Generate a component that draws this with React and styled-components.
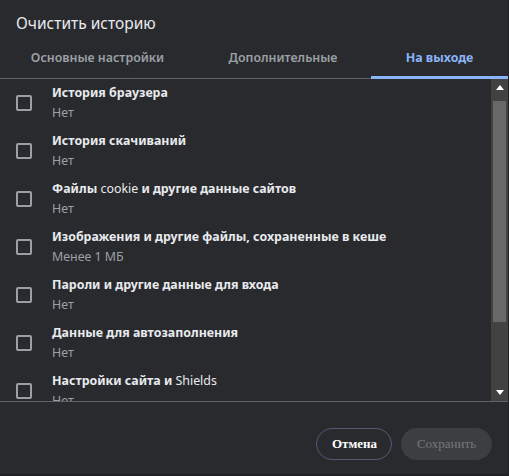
import React from "react";
import styled, { createGlobalStyle } from "styled-components";

const Global = createGlobalStyle`
  html, body { margin: 0; padding: 0; background: #202124; }
  body { font-family: "Noto Sans", "Open Sans", sans-serif; }
`;

const Dialog = styled.div`
  width: 508px;
  height: 474px;
  background: #292a2d;
  display: flex;
  flex-direction: column;
  color: #e8eaed;
`;

const Title = styled.div`
  padding: 13px 16px 0;
  height: 27px;
  font-size: 15.5px;
  line-height: 20px;
  color: #e8eaed;
`;

const TabBar = styled.div`
  display: flex;
  border-bottom: 1px solid #5f6368;
  box-sizing: border-box;
  height: 39px;
`;

const Tab = styled.div`
  width: ${(p) => p.$w}px;
  box-sizing: border-box;
  display: flex;
  align-items: center;
  justify-content: center;
  font-size: 12.4px;
  font-weight: ${(p) => (p.$active ? 700 : 600)};
  color: ${(p) => (p.$active ? "#8ab4f8" : "#9aa0a6")};
  padding-bottom: 2px;
  border-bottom: 3px solid ${(p) => (p.$active ? "#8ab4f8" : "transparent")};
  margin-bottom: -1px;
`;

const ListArea = styled.div`
  display: flex;
  height: 323px;
  border-bottom: 1px solid #5f6368;
  box-sizing: border-box;
`;

const List = styled.div`
  flex: 1;
  overflow: hidden;
`;

const Item = styled.div`
  display: flex;
  align-items: center;
  height: 48px;
  padding-left: 16px;
`;

const Box = styled.div`
  width: 16px;
  height: 16px;
  box-sizing: border-box;
  border: 2px solid #9aa0a6;
  border-radius: 2px;
  margin-right: 20px;
  flex: none;
`;

const Texts = styled.div`
  display: flex;
  flex-direction: column;
`;

const ItemTitle = styled.div`
  font-size: 12.4px;
  font-weight: 700;
  line-height: 20px;
  color: #e8eaed;
  white-space: nowrap;
`;

const Latin = styled.span`
  font-weight: 400;
`;

const ItemSub = styled.div`
  font-size: 12.4px;
  line-height: 20px;
  color: #9aa0a6;
`;

const Scrollbar = styled.div`
  width: 17px;
  background: #424242;
  display: flex;
  flex-direction: column;
  align-items: center;
`;

const Arrow = styled.div`
  height: 17px;
  width: 17px;
  display: flex;
  align-items: center;
  justify-content: center;
`;

const Thumb = styled.div`
  width: 13px;
  height: 221px;
  margin-top: 5px;
  background: #686868;
`;

const Spacer = styled.div`
  flex: 1;
`;

const Footer = styled.div`
  flex: 1;
  display: flex;
  justify-content: flex-end;
  align-items: center;
  gap: 9px;
  padding: 12px 16px 0 0;
`;

const Button = styled.button`
  height: 32px;
  border-radius: 16px;
  font-family: "Liberation Serif", serif;
  font-size: 13px;
  padding: 0 15px;
  box-sizing: border-box;
  border: ${(p) => (p.$primary ? "none" : "1px solid #5b5675")};
  background: ${(p) => (p.$primary ? "#3c3e41" : "transparent")};
  color: ${(p) => (p.$primary ? "#75787b" : "#ffffff")};
  font-weight: ${(p) => (p.$primary ? 400 : 700)};
  width: ${(p) => p.$w}px;
`;

const items = [
  { t: "История браузера", s: "Нет" },
  { t: "История скачиваний", s: "Нет" },
  { t: <>Файлы <Latin>cookie</Latin> и другие данные сайтов</>, s: "Нет" },
  { t: "Изображения и другие файлы, сохраненные в кеше", s: "Менее 1 МБ" },
  { t: "Пароли и другие данные для входа", s: "Нет" },
  { t: "Данные для автозаполнения", s: "Нет" },
  { t: <>Настройки сайта и <Latin>Shields</Latin></>, s: "Нет" },
];

export default function App() {
  return (
    <>
      <Global />
      <Dialog>
        <Title>Очистить историю</Title>
        <TabBar>
          <Tab $w={195}>Основные настройки</Tab>
          <Tab $w={176}>Дополнительные</Tab>
          <Tab $w={137} $active>На выходе</Tab>
        </TabBar>
        <ListArea>
          <List>
            {items.map((it, i) => (
              <Item key={i}>
                <Box />
                <Texts>
                  <ItemTitle>{it.t}</ItemTitle>
                  <ItemSub>{it.s}</ItemSub>
                </Texts>
              </Item>
            ))}
          </List>
          <Scrollbar>
            <Arrow>
              <svg width="8" height="5" viewBox="0 0 8 5"><path d="M4 0L8 5H0z" fill="#fff" /></svg>
            </Arrow>
            <Thumb />
            <Spacer />
            <Arrow>
              <svg width="8" height="5" viewBox="0 0 8 5"><path d="M0 0H8L4 5z" fill="#fff" /></svg>
            </Arrow>
          </Scrollbar>
        </ListArea>
        <Footer>
          <Button $w={76}>Отмена</Button>
          <Button $primary $w={91}>Сохранить</Button>
        </Footer>
      </Dialog>
    </>
  );
}
